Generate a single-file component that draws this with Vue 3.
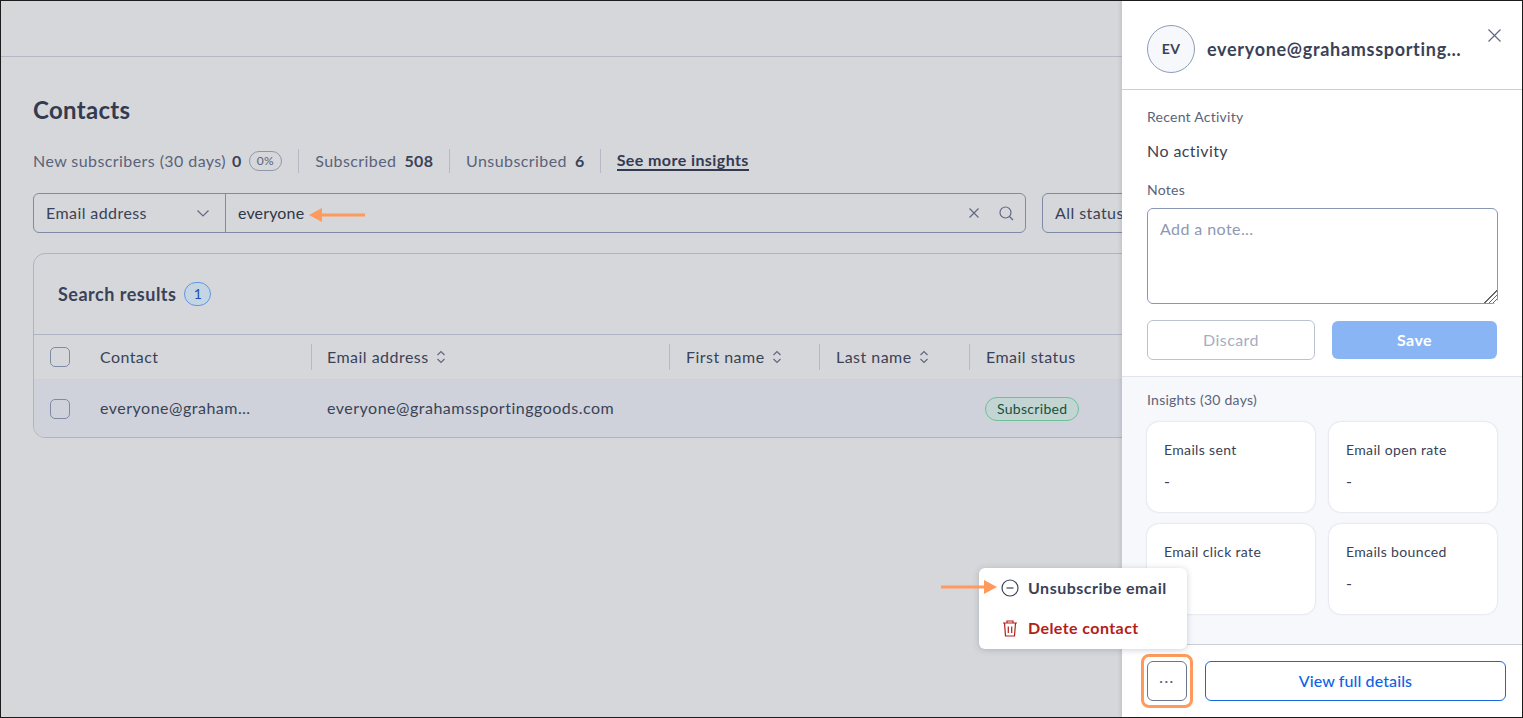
<script setup>
const stats = [
  { label: 'Subscribed', value: '508' },
  { label: 'Unsubscribed', value: '6' },
]
const columns = [
  { label: 'Email address', sort: true },
  { label: 'First name', sort: true },
  { label: 'Last name', sort: true },
  { label: 'Email status', sort: false },
]
const insights = [
  'Emails sent',
  'Email open rate',
  'Email click rate',
  'Emails bounced',
]
</script>

<template>
  <div class="screen">
    <main class="main">
      <div class="topbar"></div>
      <div class="content">
        <h1 class="title">Contacts</h1>
        <div class="stats">
          <span class="stat first">
            <span>New subscribers (30 days)</span><b>0</b><span class="pct">0%</span>
          </span>
          <span v-for="s in stats" :key="s.label" class="stat">
            <span>{{ s.label }}</span><b>{{ s.value }}</b>
          </span>
          <a class="more">See more insights</a>
        </div>
        <div class="filters">
          <div class="search-group">
            <div class="select">
              <span class="lift">Email address</span>
              <svg class="chev" width="14" height="14" viewBox="0 0 14 14"><path d="M1.500 4.500 7 10l5.500-5.500" /></svg>
            </div>
            <div class="search">
              <span class="query lift">everyone</span>
              <svg class="ico-x" width="10" height="10" viewBox="0 0 10 10"><path d="M.5.5l9 9M9.500.5l-9 9" /></svg>
              <svg class="ico-s" width="15" height="15" viewBox="0 0 15 15"><circle cx="6.500" cy="6.500" r="5.500" /><path d="M10.500 10.500 14 14" /></svg>
            </div>
          </div>
          <div class="status">All statuses</div>
        </div>
        <section class="card">
          <div class="card-head">
            <span class="card-title">Search results</span>
            <span class="count">1</span>
          </div>
          <div class="thead">
            <div class="cell c-contact"><span class="check"></span><span class="lift">Contact</span></div>
            <div v-for="c in columns" :key="c.label" class="cell th">
              <span class="lift">{{ c.label }}</span>
              <svg v-if="c.sort" class="sort" width="10" height="16" viewBox="0 0 10 16"><path d="M1.500 6 5 2.500 8.500 6M1.500 10 5 13.500 8.500 10" /></svg>
            </div>
          </div>
          <div class="trow">
            <div class="cell c-contact"><span class="check"></span><span class="trunc lift">everyone@grahamssportinggoods.com</span></div>
            <div class="cell td"><span class="lift">everyone@grahamssportinggoods.com</span></div>
            <div class="cell td"></div>
            <div class="cell td"></div>
            <div class="cell td"><span class="pill">Subscribed</span></div>
          </div>
        </section>
      </div>
      <svg class="arrow arrow-search" width="56" height="14" viewBox="0 0 56 14"><path d="M0 7 13 0v5.500h43v3H13V14z" /></svg>
    </main>

    <aside class="panel">
      <header class="panel-head">
        <span class="avatar">EV</span>
        <span class="panel-title">everyone@grahamssportinggoods.com</span>
        <svg class="close" width="13" height="13" viewBox="0 0 13 13"><path d="M.5.5l12 12M12.500.5l-12 12" /></svg>
      </header>
      <div class="panel-body">
        <div class="label">Recent Activity</div>
        <div class="activity">No activity</div>
        <div class="label notes-label">Notes</div>
        <textarea class="note" placeholder="Add a note..."></textarea>
        <div class="actions">
          <button class="btn discard">Discard</button>
          <button class="btn save">Save</button>
        </div>
      </div>
      <div class="insights">
        <div class="label">Insights (30 days)</div>
        <div class="grid">
          <div v-for="i in insights" :key="i" class="metric">
            <div class="metric-label">{{ i }}</div>
            <div class="metric-value">-</div>
          </div>
        </div>
      </div>
      <footer class="panel-foot">
        <div class="more-wrap">
          <span class="ring"></span>
          <button class="btn dots">···</button>
        </div>
        <button class="btn view">View full details</button>
      </footer>
    </aside>

    <div class="menu">
      <div class="item">
        <svg width="18" height="18" viewBox="0 0 18 18"><circle cx="9" cy="9" r="8" /><path d="M5.500 9h7" /></svg>
        <span>Unsubscribe email</span>
      </div>
      <div class="item danger">
        <svg width="18" height="18" viewBox="0 0 18 18"><path d="M2 4h14M6 4V2h6v2M3.500 4l1 13h9l1-13M7.300 7.500v6.500M10.700 7.500v6.500" /></svg>
        <span>Delete contact</span>
      </div>
    </div>
    <svg class="arrow arrow-menu" width="56" height="14" viewBox="0 0 56 14"><path d="M56 7 43 0v5.500H0v3h43V14z" /></svg>
  </div>
</template>

<style>
html, body { margin: 0; padding: 0; }
</style>

<style scoped>
* { box-sizing: border-box; }
.screen {
  position: relative;
  display: flex;
  width: 1523px;
  height: 718px;
  border: 1px solid #1b1b1b;
  overflow: hidden;
  background: #d6d7db;
  color: #3a4257;
  font-family: Lato, "Noto Sans", sans-serif;
  font-size: 16px;
  letter-spacing: .42px;
}
.lift { margin-top: -2px; }
.main {
  position: relative;
  flex: 0 0 1121px;
  overflow: hidden;
}
.topbar {
  height: 56px;
  border-bottom: 1px solid #b4b9c6;
}
.content {
  width: 1400px;
  padding: 37px 0 0 32px;
}
.title {
  margin: 0;
  font-size: 24px;
  line-height: 32px;
  font-weight: 700;
  letter-spacing: .3px;
  color: #333b50;
}
.stats {
  display: flex;
  align-items: center;
  height: 24px;
  margin-top: 23px;
  color: #5a6379;
}
.stat {
  display: flex;
  align-items: center;
  gap: 8px;
  padding: 0 15px 0 16.500px;
  border-right: 1px solid #b4b9c6;
  height: 24px;
  line-height: 22px;
}
.stat.first { padding: 0 16px 0 0; gap: 6px; }
.stat b { color: #3a4257; }
.pct {
  margin-left: 1px;
  padding: 0 7px;
  height: 20px;
  line-height: 18px;
  font-size: 12px;
  letter-spacing: .2px;
  border: 1px solid #8f97ab;
  border-radius: 10px;
}
.more {
  margin-left: 16px;
  font-weight: 700;
  color: #333b50;
  border-bottom: 2px solid #333b50;
  line-height: 18px;
}
.filters {
  display: flex;
  gap: 16px;
  margin-top: 20px;
  height: 40px;
}
.search-group {
  display: flex;
  width: 993px;
  border: 1px solid #7f8aa6;
  border-radius: 6px;
}
.select {
  display: flex;
  align-items: center;
  justify-content: space-between;
  width: 192px;
  padding: 0 15px 0 12px;
  border-right: 1px solid #7f8aa6;
}
.chev, .sort, .ico-x, .ico-s, .close {
  fill: none;
  stroke: #5f6980;
  stroke-width: 1.200;
}
.search {
  display: flex;
  align-items: center;
  flex: 1;
  padding: 0 11px 0 12px;
}
.query { flex: 1; color: #2f3648; letter-spacing: .15px; }
.ico-s { margin-left: 20px; }
.status {
  width: 200px;
  padding-left: 12px;
  line-height: 37px;
  border: 1px solid #7f8aa6;
  border-radius: 6px;
}
.card {
  width: 1300px;
  margin-top: 20px;
  border: 1px solid #aeb4c4;
  border-radius: 12px;
  overflow: hidden;
}
.card-head {
  display: flex;
  align-items: center;
  gap: 8px;
  height: 81px;
  padding-left: 24px;
  border-bottom: 1px solid #aeb4c4;
}
.card-title {
  font-size: 18px;
  font-weight: 700;
  letter-spacing: .5px;
}
.count {
  width: 27px;
  height: 24px;
  text-align: center;
  line-height: 22px;
  font-size: 14px;
  color: #1f4fb0;
  background: #c4d5e4;
  border: 1px solid #5f97e0;
  border-radius: 12px;
}
.thead, .trow {
  display: grid;
  grid-template-columns: 277px 358px 150px 150px 150px 1fr;
  align-items: center;
}
.thead { height: 44px; }
.trow {
  height: 58px;
  background: #cfd2da;
  border-top: 1px solid #cdd0d8;
}
.cell {
  display: flex;
  align-items: center;
  min-width: 0;
  padding-left: 16px;
}
.c-contact { gap: 30px; }
.th {
  gap: 7px;
  height: 26px;
  border-left: 1px solid #b4b9c6;
  letter-spacing: .47px;
}
.c-contact + .th { padding-left: 15px; }
.th span { white-space: nowrap; }
.check {
  flex: none;
  width: 20px;
  height: 20px;
  border: 1px solid #7f8aa6;
  border-radius: 5px;
}
.trunc {
  width: 155px;
  white-space: nowrap;
  overflow: hidden;
  text-overflow: ellipsis;
  letter-spacing: .5px;
}
.td { white-space: nowrap; letter-spacing: .5px; }
.pill {
  padding: 0 11px;
  height: 24px;
  line-height: 22px;
  font-size: 14px;
  letter-spacing: .3px;
  color: #14513f;
  background: #c3d5d2;
  border: 1px solid #6cc196;
  border-radius: 12px;
}
.arrow { position: absolute; fill: #ff9a5c; }
.arrow-search { left: 308px; top: 207px; }
.arrow-menu { left: 940px; top: 579px; }
.panel {
  position: relative;
  display: flex;
  flex-direction: column;
  flex: 0 0 400px;
  width: 400px;
  min-width: 0;
  background: #fff;
  box-shadow: -2px 0 3px rgba(60, 70, 90, .12);
}
.panel-head {
  display: flex;
  align-items: center;
  gap: 12px;
  height: 89px;
  padding: 8px 60px 0 25px;
  border-bottom: 1px solid #c9ced9;
}
.avatar {
  flex: none;
  width: 48px;
  height: 48px;
  border: 1px solid #8f9bb8;
  border-radius: 50%;
  background: #f6f8fc;
  text-align: center;
  line-height: 46px;
  font-size: 14px;
  font-weight: 700;
}
.panel-title {
  min-width: 0;
  font-size: 18px;
  font-weight: 700;
  letter-spacing: .7px;
  white-space: nowrap;
  overflow: hidden;
  text-overflow: ellipsis;
}
.close { position: absolute; top: 28px; right: 21px; }
.panel-body {
  padding: 17px 25px 16px;
  border-bottom: 1px solid #dfe4ee;
}
.label {
  font-size: 14px;
  line-height: 20px;
  letter-spacing: .25px;
  color: #5a6379;
}
.activity {
  margin-top: 12px;
  line-height: 24px;
}
.notes-label { margin-top: 17px; }
.note {
  display: block;
  width: 351px;
  height: 96px;
  margin-top: 8px;
  padding: 10px 12px;
  border: 1px solid #8a96b4;
  border-radius: 6px;
  font: inherit;
  letter-spacing: inherit;
  color: inherit;
  outline: none;
}
.note::placeholder { color: #8e98b2; }
.note::-webkit-resizer {
  background:
    linear-gradient(135deg, #fff 50%, transparent 50%),
    repeating-linear-gradient(135deg, #666 0 1px, #fff 1px 3px);
}
.actions {
  display: flex;
  gap: 17px;
  margin-top: 16px;
}
.btn {
  height: 40px;
  padding: 0 0 2px;
  font: inherit;
  letter-spacing: inherit;
  background: #fff;
  border-radius: 6px;
}
.discard {
  width: 168px;
  color: #a6adc0;
  border: 1px solid #bcc2d0;
}
.save {
  width: 165px;
  height: 38px;
  margin-top: 1px;
  color: #fff;
  font-weight: 700;
  background: #8ab5f5;
  border: 0;
}
.insights {
  flex: 1;
  padding: 13px 25px 0;
  background: #f6f8fc;
  border-bottom: 1px solid #c9ced9;
}
.grid {
  display: grid;
  grid-template-columns: repeat(2, minmax(0, 1fr));
  gap: 12px 14px;
  margin-top: 12px;
}
.metric {
  height: 90px;
  padding: 18px 17px 0;
  background: #fff;
  border-radius: 12px;
  box-shadow: 0 0 2px rgba(90, 100, 130, .3);
}
.metric-label { font-size: 14px; line-height: 20px; letter-spacing: .35px; }
.metric-value { margin-top: 11px; line-height: 20px; }
.panel-foot {
  display: flex;
  align-items: flex-start;
  gap: 18px;
  height: 72px;
  padding: 16px 16px 0 25px;
}
.more-wrap { position: relative; flex: none; }
.ring {
  position: absolute;
  inset: -7px -6px;
  border: 3px solid #ff9a5c;
  border-radius: 8px;
}
.dots {
  position: relative;
  display: block;
  width: 40px;
  border: 1px solid #6a7590;
  color: #5a6379;
  font-size: 14px;
  letter-spacing: 1.500px;
}
.view {
  flex: 1;
  color: #0f63e6;
  font-weight: 500;
  letter-spacing: .1px;
  border: 1px solid #1467e6;
}
.menu {
  position: absolute;
  left: 978px;
  top: 567px;
  width: 208px;
  padding-bottom: 1px;
  background: #fff;
  border-radius: 6px;
  box-shadow: 0 1px 6px rgba(60, 70, 90, .25);
}
.item {
  display: flex;
  align-items: center;
  gap: 9px;
  height: 40px;
  padding-left: 22px;
  font-weight: 700;
  letter-spacing: .5px;
}
.item span { margin-top: -2px; }
.item svg { fill: none; stroke: #3a4257; stroke-width: 1.200; }
.danger { color: #b3201a; letter-spacing: .42px; }
.danger svg { stroke: #b3201a; }
</style>
